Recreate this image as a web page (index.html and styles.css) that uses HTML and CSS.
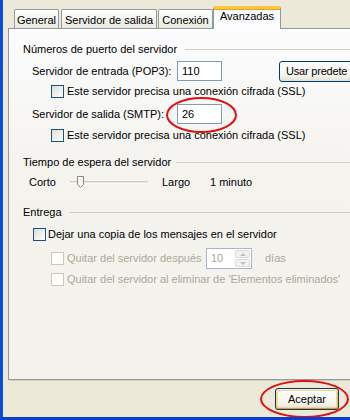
FILE: index.html
```html
<!DOCTYPE html>
<html lang="es">
<head>
<meta charset="utf-8">
<title>Propiedades de la cuenta</title>
<link rel="stylesheet" href="styles.css">
</head>
<body>
<div class="window">
  <div class="tabs">
    <div class="tab t-general">General</div>
    <div class="tab t-salida">Servidor de salida</div>
    <div class="tab t-conexion">Conexión</div>
    <div class="tab active t-avanz">Avanzadas</div>
  </div>
  <div class="panel">
    <div class="group-head g1"><span>Números de puerto del servidor</span><i class="rule"></i></div>

    <div class="row port-row r-pop">
      <span class="port-label">Servidor de entrada (POP3):</span>
      <span class="textbox">110</span>
      <span class="btn btn-default-port">Usar predete</span>
    </div>
    <div class="row cb-row r-ssl1">
      <span class="cb"></span><span>Este servidor precisa una conexión cifrada (SSL)</span>
    </div>
    <div class="row port-row r-smtp">
      <span class="port-label">Servidor de salida (SMTP):</span>
      <span class="textbox">26</span>
    </div>
    <div class="row cb-row r-ssl2">
      <span class="cb"></span><span>Este servidor precisa una conexión cifrada (SSL)</span>
    </div>

    <div class="group-head g2"><span>Tiempo de espera del servidor</span><i class="rule"></i></div>
    <div class="row slider-row">
      <span class="corto">Corto</span>
      <svg class="slider" width="80" height="20" viewBox="0 0 80 20">
        <line x1="0" y1="10" x2="78" y2="10" stroke="#A6A59C" stroke-width="1"/>
        <line x1="0" y1="11" x2="78" y2="11" stroke="#FFFFFF" stroke-width="1"/>
        <path d="M7.5 4.5 H13.5 V12.5 L10.5 15.5 L7.5 12.5 Z" fill="#F3F3EF" stroke="#8A8A80" stroke-width="1"/>
        <line x1="8.5" y1="5.5" x2="12.5" y2="5.5" stroke="#FFFFFF"/>
      </svg>
      <span class="largo">Largo</span>
      <span class="minuto">1 minuto</span>
    </div>

    <div class="group-head g3"><span>Entrega</span><i class="rule"></i></div>
    <div class="row cb-row r-dejar">
      <span class="cb"></span><span>Dejar una copia de los mensajes en el servidor</span>
    </div>
    <div class="row cb-row r-quitar1 disabled">
      <span class="cb"></span><span class="q1">Quitar del servidor después</span>
      <span class="spin"><span class="spin-val">10</span><span class="spin-btns"><i class="up"></i><i class="down"></i></span></span>
      <span class="dias">días</span>
    </div>
    <div class="row cb-row r-quitar2 disabled">
      <span class="cb"></span><span>Quitar del servidor al eliminar de 'Elementos eliminados'</span>
    </div>
  </div>
  <div class="footer">
    <span class="btn btn-ok">Aceptar</span>
  </div>

  <div class="mark mark-smtp"></div>
  <div class="mark mark-ok"></div>
</div>
</body>
</html>
```
FILE: styles.css
```css
* { box-sizing: border-box; }
html, body { margin: 0; padding: 0; }
body {
  width: 350px;
  height: 420px;
  overflow: hidden;
  font-family: "Liberation Sans", Arial, sans-serif;
  font-size: 11px;
  color: #000;
  background: #ECE9D8;
}
.window {
  position: relative;
  width: 350px;
  height: 420px;
  overflow: hidden;
  background: #ECE9D8;
  border-left: 3px solid #0A4EDB;
  border-bottom: 3px solid #0A3FD0;
}
/* tabs */
.tabs {
  display: flex;
  align-items: flex-end;
  height: 28px;
  padding-top: 6px;
  padding-left: 11px;
}
.tab {
  height: 19px;
  border: 1px solid #919B9C;
  border-bottom: none;
  border-radius: 2px 2px 0 0;
  background: linear-gradient(#FFFFFF, #F3F2ED 60%, #E9E8E1);
  display: flex;
  align-items: center;
  justify-content: center;
  white-space: nowrap;
  padding-top: 1px;
}
.t-general { width: 45px; }
.t-salida { width: 96px; margin-left: 2px; }
.t-conexion { width: 55px; margin-left: 1px; }
.t-avanz {
  width: 68px;
  margin-left: 0;
}
.tab.active {
  height: 23px;
  margin-bottom: -1px;
  position: relative;
  z-index: 2;
  background: #FCFCFE;
  border-top: 3px solid #FFC83C;
  box-shadow: inset 0 1px 0 #E8A030;
  align-items: flex-start;
  padding-top: 1px;
}
/* panel */
.panel {
  width: 400px;
  height: 352px;
  margin-left: 5px;
  border: 1px solid #919B9C;
  box-shadow: 1px 1px 0 #D0CEBF;
  background: linear-gradient(#FCFCFE, #F4F3EE 40%, #F3F2EC);
  padding: 0 0 0 14px;
  display: flex;
  flex-direction: column;
}
.group-head {
  height: 14px;
  display: flex;
  align-items: center;
  white-space: nowrap;
}
.group-head .rule {
  flex: 1;
  height: 1px;
  background: #D0D0BF;
  margin-left: 8px;
  margin-top: 1px;
}
.g1 { margin-top: 13px; }
.g2 { margin-top: 13px; }
.g2 .rule { margin-left: 5px; }
.g3 { margin-top: 13px; }
.g3 .rule { margin-left: 7px; }

.row {
  display: flex;
  align-items: center;
  white-space: nowrap;
}
.port-row { height: 20px; padding-left: 9px; }
.r-pop { margin-top: 5px; }
.r-smtp { margin-top: 6px; }
.port-label { width: 145px; }
.textbox {
  width: 45px;
  height: 20px;
  border: 1px solid #7F9DB9;
  background: #FFFFFF;
  padding-left: 4px;
  display: flex;
  align-items: center;
}
.btn {
  height: 21px;
  border: 1px solid #003C74;
  border-radius: 3px;
  background: linear-gradient(#FFFFFF, #F5F4EF 70%, #E3E1D6);
  display: inline-flex;
  align-items: center;
  justify-content: center;
}
.btn-default-port {
  width: 115px;
  margin-left: 57px;
  justify-content: flex-start;
  padding-left: 6px;
  letter-spacing: -0.2px;
}
.cb-row { height: 14px; padding-left: 28px; }
.r-ssl1 { margin-top: 3px; }
.r-ssl2 { margin-top: 4px; }
.cb {
  width: 13px;
  height: 13px;
  border: 1px solid #1C5180;
  background: linear-gradient(135deg, #DCDCD7, #FFFFFF);
  margin-right: 3px;
  flex: none;
}
.disabled { color: #ACA899; }
.disabled .cb {
  border-color: #CAC8BB;
  background: #FFFFFF;
}
/* slider */
.slider-row { height: 20px; margin-top: 3px; padding-left: 6px; }
.corto { width: 41px; }
.slider { display: block; }
.largo { margin-left: 12px; width: 48px; }

.r-dejar { margin-top: 8px; padding-left: 10px; }
.r-dejar .cb { margin-right: 2px; }
.r-quitar1 { margin-top: 6px; height: 22px; }
.q1 { width: 139px; }
.spin {
  width: 46px;
  height: 21px;
  border: 1px solid #A5B7C9;
  background: #FFFFFF;
  display: flex;
  align-items: center;
  padding: 1px;
}
.spin-val { flex: 1; padding-left: 3px; color: #ACA899; }
.spin-btns {
  width: 15px;
  height: 17px;
  display: flex;
  flex-direction: column;
  gap: 1px;
}
.spin-btns i {
  flex: 1;
  border: 1px solid #DCDCDC;
  border-radius: 2px;
  background: #F2F2EE;
  position: relative;
}
.spin-btns i::after {
  content: "";
  position: absolute;
  left: 4px;
  top: 2px;
  border-left: 3px solid transparent;
  border-right: 3px solid transparent;
}
.spin-btns .up::after { border-bottom: 3px solid #C4C2B6; }
.spin-btns .down::after { border-top: 3px solid #C4C2B6; }
.dias { margin-left: 13px; }
.r-quitar2 { margin-top: 3px; }

/* footer */
.footer {
  display: flex;
  justify-content: flex-end;
  padding-right: 11px;
  margin-top: 8px;
}
.btn-ok {
  width: 64px;
  height: 22px;
  box-shadow: inset 0 1px 0 #FFF0CF, inset 0 -1px 0 #E5972B, inset 1px 0 0 #FBD87D, inset -1px 0 0 #F8B84A, inset 0 0 0 2px #FCD68A;
}

/* red hand-drawn marks over the screenshot */
.mark {
  position: absolute;
  border: 2px solid #E01010;
  border-radius: 50%;
  z-index: 5;
}
.mark-smtp { left: 163px; top: 97px; width: 71px; height: 36px; }
.mark-ok { left: 257px; top: 380px; width: 89px; height: 38px; }
```
